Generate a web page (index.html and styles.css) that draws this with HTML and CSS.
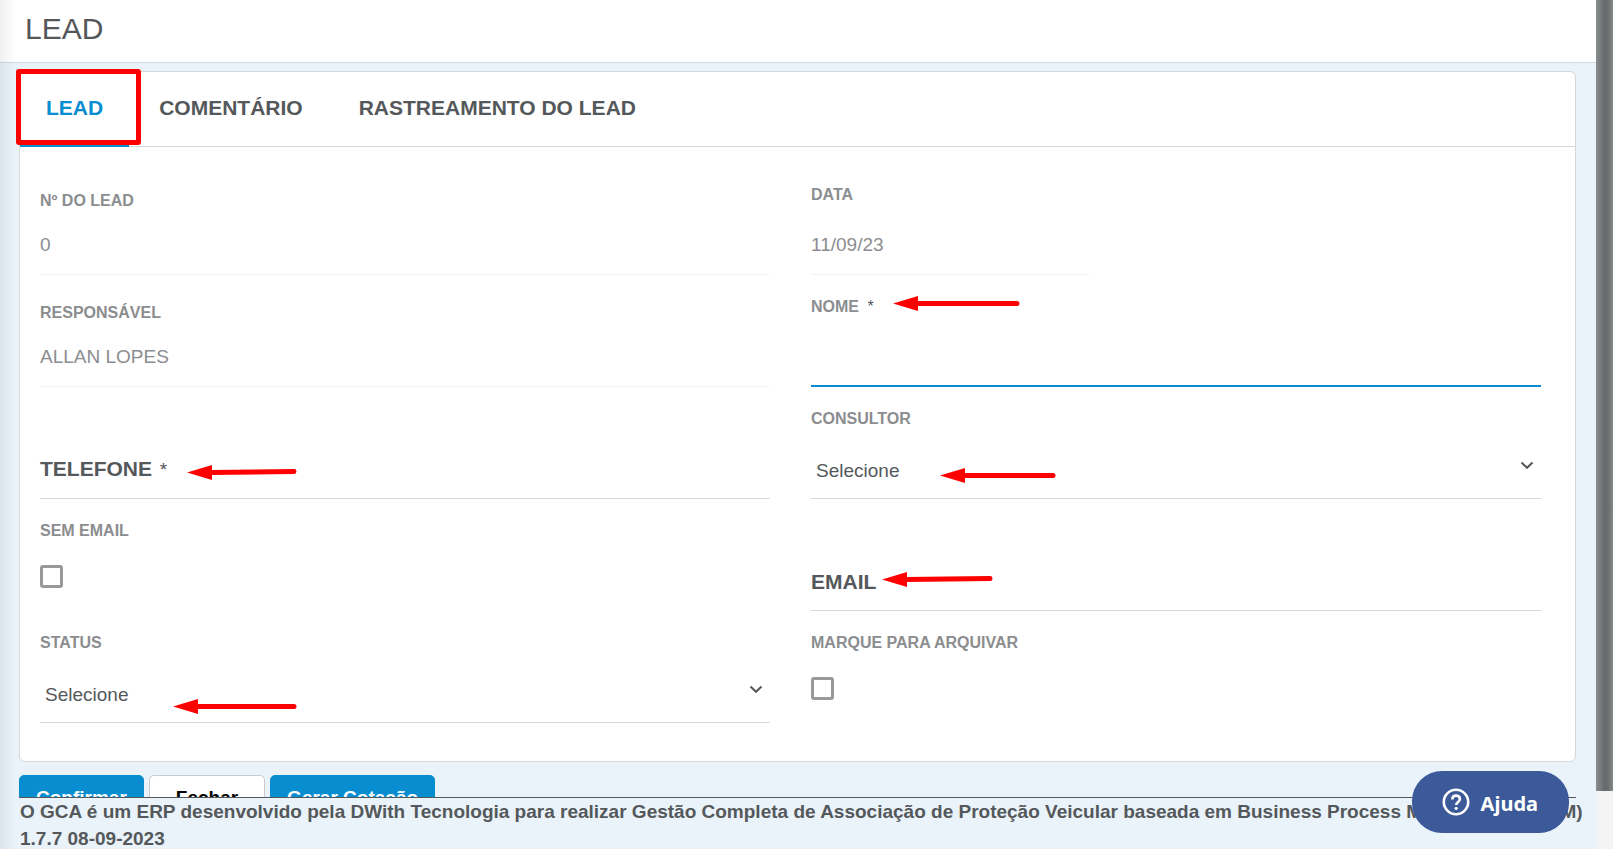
FILE: index.html
```html
<!DOCTYPE html>
<html lang="pt-BR">
<head>
<meta charset="utf-8">
<title>Lead</title>
<link rel="stylesheet" href="styles.css">
</head>
<body>
<svg class="defs" width="0" height="0" aria-hidden="true">
  <symbol id="chevron" viewBox="0 0 14 9"><path d="M1.500 1.500 7 6.800l5.500-5.300" fill="none" stroke="#54585b" stroke-width="2"/></symbol>
</svg>
<div class="app">
  <div class="page">
    <header class="page-header"><h1>LEAD</h1></header>
    <main class="content">
      <form class="panel" id="lead-form">
        <nav class="tabs">
          <a class="tab tab-active" href="#lead">LEAD<span class="marker-box"></span></a>
          <a class="tab" href="#comentario">COMENTÁRIO</a>
          <a class="tab" href="#rastreamento">RASTREAMENTO DO LEAD</a>
        </nav>
        <div class="fields">
          <div class="field field-low">
            <label class="label" for="numero">Nº DO LEAD</label>
            <input class="control readonly" id="numero" type="text" value="0" readonly>
          </div>
          <div class="field">
            <label class="label" for="data">DATA</label>
            <input class="control readonly date" id="data" type="text" value="11/09/23" readonly>
          </div>
          <div class="field field-low">
            <label class="label" for="responsavel">RESPONSÁVEL</label>
            <input class="control readonly" id="responsavel" type="text" value="ALLAN LOPES" readonly>
          </div>
          <div class="field">
            <label class="label" for="nome">NOME <span class="required">*</span></label>
            <input class="control focused" id="nome" type="text">
            <svg class="arrow arrow-nome" width="127" height="15"><path d="M0 7.500 25 0v15z"/><path class="shaft" d="M24 7.500H124"/></svg>
          </div>
          <div class="field">
            <label class="floating" for="telefone">TELEFONE <span class="required">*</span></label>
            <input class="control" id="telefone" type="text">
            <svg class="arrow arrow-telefone" width="110" height="15"><path d="M0 7.500 25 0v15z"/><path class="shaft" d="M24 7.500 107 6.500"/></svg>
          </div>
          <div class="field">
            <label class="label" for="consultor">CONSULTOR</label>
            <select class="control select" id="consultor"><option>Selecione</option></select>
            <svg class="chevron"><use href="#chevron"/></svg>
            <svg class="arrow arrow-consultor" width="116" height="15"><path d="M0 7.500 25 0v15z"/><path class="shaft" d="M24 7.500H113"/></svg>
          </div>
          <div class="field">
            <label class="label" for="sem-email">SEM EMAIL</label>
            <input class="check" id="sem-email" type="checkbox">
          </div>
          <div class="field">
            <label class="floating" for="email">EMAIL</label>
            <input class="control" id="email" type="text">
            <svg class="arrow arrow-email" width="111" height="15"><path d="M0 7.500 25 0v15z"/><path class="shaft" d="M24 7.500 108 6.500"/></svg>
          </div>
          <div class="field">
            <label class="label" for="status">STATUS</label>
            <select class="control select" id="status"><option>Selecione</option></select>
            <svg class="chevron"><use href="#chevron"/></svg>
            <svg class="arrow arrow-status" width="124" height="15"><path d="M0 7.500 25 0v15z"/><path class="shaft" d="M24 7.500H121"/></svg>
          </div>
          <div class="field">
            <label class="label" for="arquivar">MARQUE PARA ARQUIVAR</label>
            <input class="check" id="arquivar" type="checkbox">
          </div>
        </div>
      </form>
      <div class="actions">
        <button class="btn btn-primary" type="submit" form="lead-form">Confirmar</button>
        <button class="btn btn-plain" type="button">Fechar</button>
        <button class="btn btn-primary" type="button">Gerar Cotação</button>
      </div>
    </main>
    <footer class="footer"><p>O GCA é um ERP desenvolvido pela DWith Tecnologia para realizar Gestão Completa de Associação de Proteção Veicular baseada em Business Process Management (BPM) 1.7.7 08-09-2023</p></footer>
    <div class="edge-shade"></div>
  </div>
  <div class="scroll-track"><div class="scroll-thumb"></div></div>
  <button class="help" type="button">
    <svg width="28" height="28" viewBox="0 0 28 28" fill="none" stroke="#fff">
      <circle cx="14" cy="14" r="12.200" stroke-width="2.600"/>
      <path d="M10.300 11.600c0-2.500 1.600-4 3.800-4s3.800 1.400 3.800 3.400c0 3-3.700 3-3.700 6" stroke-width="2.600"/>
      <circle cx="14.200" cy="20.300" r="1.600" fill="#fff" stroke="none"/>
    </svg>
    <span>Ajuda</span>
  </button>
</div>
</body>
</html>
```
FILE: styles.css
```css
* { box-sizing: border-box; }

body {
  margin: 0;
  font-family: "Liberation Sans", Arial, sans-serif;
  font-size: 19px;
  color: #54585b;
  background: #eaf3f9;
}

.defs { position: absolute; }

.app {
  display: flex;
  height: 100vh;
  overflow: hidden;
  position: relative;
}

.page {
  flex: 1;
  min-width: 0;
  display: flex;
  flex-direction: column;
  position: relative;
}

.page-header {
  flex: none;
  padding: 12px 25px 16px;
  background: #fff;
  border-bottom: 1px solid #d4dadb;
}

.page-header h1 {
  margin: 0;
  font-size: 30px;
  line-height: 34px;
  font-weight: 400;
}

.content {
  flex: 1;
  min-height: 0;
  overflow: hidden;
  padding: 8px 20px 0 19px;
}

.panel {
  background: #fff;
  border: 1px solid #d4d8da;
  border-radius: 6px;
}

.tabs {
  display: flex;
  gap: 4px;
  border-bottom: 1px solid #d4d8da;
}

.tab {
  position: relative;
  padding: 24px 26px;
  margin-bottom: -1px;
  border-bottom: 3px solid transparent;
  font-size: 21px;
  line-height: 24px;
  font-weight: 700;
  color: #54585b;
  text-decoration: none;
}

.tab-active {
  color: #088dd0;
  border-bottom-color: #088dd0;
}

.marker-box {
  position: absolute;
  inset: -3px -12px -1px -4px;
  border: 5px solid #f00;
  border-radius: 3px;
}

.fields {
  display: grid;
  grid-template-columns: 1fr 1fr;
  column-gap: 41px;
  padding: 16px 34px 38px 20px;
}

.field {
  position: relative;
  display: flex;
  flex-direction: column;
  align-items: flex-start;
  min-height: 112px;
  padding-top: 22px;
}

.field-low { padding-top: 28px; }

.label {
  font-size: 16px;
  line-height: 20px;
  font-weight: 700;
  color: #8b8d8f;
}

.required {
  margin-left: 4px;
  font-weight: 400;
  color: #54585b;
}

.floating {
  position: absolute;
  left: 0;
  bottom: 17px;
  font-size: 21px;
  line-height: 24px;
  font-weight: 700;
}

.floating .required {
  margin-left: 2px;
  font-size: 19px;
}

.control {
  width: 100%;
  height: 58px;
  margin: auto 0 0;
  padding: 0;
  border: 0;
  border-bottom: 1px solid #d6d7d9;
  border-radius: 0;
  background: transparent;
  font: inherit;
  color: inherit;
  outline: none;
}

.readonly {
  padding-bottom: 2px;
  color: #8b8d8f;
  border-bottom-color: #f3f3f3;
}

.date { width: 278px; }

.focused { border-bottom: 2px solid #088dd0; }

.select {
  appearance: none;
  padding: 2px 32px 0 5px;
}

.chevron {
  position: absolute;
  right: 7px;
  bottom: 29px;
  width: 14px;
  height: 9px;
  pointer-events: none;
}

.check {
  appearance: none;
  width: 23px;
  height: 23px;
  margin: 24px 0 0;
  border: 3px solid #97999b;
  border-radius: 3px;
  background: #fff;
}

.arrow {
  position: absolute;
  fill: #f00;
  pointer-events: none;
}

.shaft {
  fill: none;
  stroke: #f00;
  stroke-width: 5;
  stroke-linecap: round;
}

.arrow-nome { left: 82px; top: 21px; }
.arrow-telefone { left: 147px; top: 78px; }
.arrow-consultor { left: 129px; top: 81px; }
.arrow-email { left: 71px; top: 73px; }
.arrow-status { left: 133px; top: 88px; }

.actions {
  display: flex;
  gap: 5px;
  padding-top: 13px;
}

.btn {
  height: 46px;
  padding: 0 16px;
  border: 1px solid #088dd0;
  border-radius: 5px;
  font: inherit;
  font-weight: 700;
}

.btn-primary {
  background: #088dd0;
  color: #fff;
}

.btn-plain {
  padding: 0 26px;
  background: #fff;
  border-color: #c8cccf;
  color: #000;
}

.footer {
  flex: none;
  height: 52px;
  margin: 0 20px 0 19px;
  border-top: 1px solid #54585b;
  line-height: 27px;
  font-weight: 700;
}

.footer p { margin: 0 -18px 0 1px; }

.edge-shade {
  position: absolute;
  inset: 0 auto 0 0;
  width: 16px;
  background: linear-gradient(to right, rgba(60, 60, 90, 0.08), rgba(60, 60, 90, 0));
  pointer-events: none;
}

.scroll-track {
  flex: none;
  width: 17px;
  background: #f3f3f3;
}

.scroll-thumb {
  height: 93.2%;
  background: linear-gradient(to right, #8a8d8e, #666a6b 50%, #6a6e6f 70%, #85898a);
}

.help {
  position: absolute;
  right: 44px;
  bottom: 16px;
  display: flex;
  align-items: center;
  gap: 11px;
  height: 62px;
  padding: 0 31px 0 30px;
  border: 0;
  border-radius: 30px;
  background: #3c5999;
  color: #fff;
  font-family: "Noto Sans", sans-serif;
  font-size: 20px;
  font-weight: 700;
}

.help span { padding-top: 3px; }
```
